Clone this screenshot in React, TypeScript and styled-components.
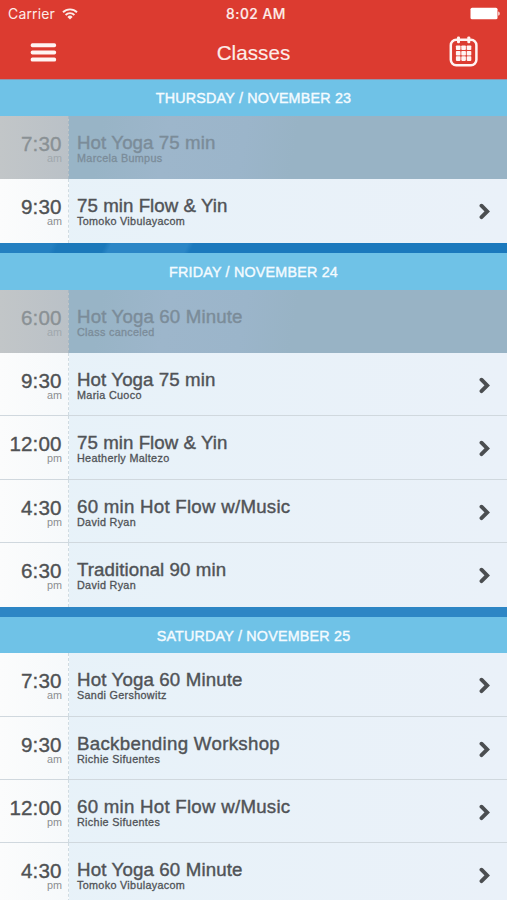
import React from 'react';
import styled, { createGlobalStyle } from 'styled-components';

const GlobalStyle = createGlobalStyle`
  * { box-sizing: border-box; }
  html, body { margin: 0; padding: 0; height: 900px; overflow: hidden; }
  body {
    background: #2882c2;
    font-family: "Liberation Sans", Arial, sans-serif;
    color: #505357;
  }
`;

const Screen = styled.div`
  width: 507px;
  height: 900px;
  overflow: hidden;
  display: flex;
  flex-direction: column;
`;

const TopBar = styled.header`
  flex: none;
  height: 79.4px;
  background: #dc3b30;
  color: #fdece9;
  position: relative;
  box-shadow: 0 1px 0 #9395ac;
`;

const StatusBar = styled.div`
  height: 27px;
  padding: 0 6px 0 8px;
  display: grid;
  grid-template-columns: 1fr auto 1fr;
  align-items: center;
  font-family: Inter, Roboto, sans-serif;
  font-size: 14px;
`;

const Carrier = styled.div`
  display: flex;
  align-items: center;
  gap: 7px;
  letter-spacing: 0.15px;
`;

const Clock = styled.div`
  margin-left: 3px;
  font-size: 13.8px;
  font-weight: 500;
  letter-spacing: 0.5px;
  -webkit-text-stroke: 0.15px currentColor;
`;

const StatusRight = styled.div`
  display: flex;
  justify-content: flex-end;
`;

const NavBar = styled.nav`
  height: 52px;
  padding: 0 28px 0 30px;
  display: grid;
  grid-template-columns: 1fr auto 1fr;
  align-items: center;
`;

const NavTitle = styled.h1`
  margin: 0 2px 0 0;
  font-size: 20.6px;
  font-weight: 400;
  line-height: 52px;
  letter-spacing: 0.05px;
  -webkit-text-stroke: 0.15px currentColor;
`;

const IconButton = styled.button<{ $end?: boolean }>`
  display: flex;
  padding: 0;
  border: 0;
  background: none;
  color: #fff4f2;
  justify-self: ${(p) => (p.$end ? 'end' : 'start')};
`;

const Day = styled.section<{ $gap: string }>`
  flex: none;
  padding-bottom: 10.2px;
  background: ${(p) => p.$gap};
`;

const DayHeading = styled.h2`
  margin: 0;
  height: 36.6px;
  line-height: 38px;
  background: #6fc2e7;
  color: #f4fbff;
  font-size: 14.3px;
  font-weight: 400;
  letter-spacing: 0.21px;
  text-align: center;
  -webkit-text-stroke: 0.4px currentColor;
`;

const Row = styled.div<{ $muted?: boolean }>`
  height: 63.4px;
  display: grid;
  grid-template-columns: 69px 1fr 35px;
  color: ${(p) => (p.$muted ? '#7b8c99' : '#505357')};
  background: ${(p) =>
    p.$muted
      ? 'linear-gradient(100deg, #98b4c6 20%, #9db6cb 33%, #9bb5ca 48%, #98b3c5 58%, #98b3c5)'
      : 'linear-gradient(90deg, #e7f2f9, #eaf1f9)'};
  border-bottom: ${(p) => (p.$muted ? '0' : '1px')} solid #d0d8de;
  &:last-child { border-bottom: 0; }
`;

const TimeCell = styled.div<{ $muted?: boolean }>`
  padding: 19px 6.5px 0 0;
  text-align: right;
  color: ${(p) => (p.$muted ? '#8a9195' : '#505254')};
  background: ${(p) => (p.$muted ? 'linear-gradient(90deg, #c2c6c8, #bac1c7)' : 'linear-gradient(90deg, #fbfcfc, #f6f9fb)')};
  border-right: 1px dashed ${(p) => (p.$muted ? '#a8b7c2' : '#d0dbe1')};
`;

const Hour = styled.div`
  font-size: 20.6px;
  line-height: 18px;
  letter-spacing: 0.1px;
  -webkit-text-stroke: 0.35px currentColor;
`;

const Meridiem = styled.div<{ $muted?: boolean }>`
  font-size: 10.8px;
  line-height: 11px;
  margin-right: -0.5px;
  color: ${(p) => (p.$muted ? '#a0a8ad' : '#8b8e91')};
`;

const Info = styled.div`
  padding: 17px 0 0 8px;
  white-space: nowrap;
`;

const ClassName = styled.div<{ $tracking?: number }>`
  font-size: 18.7px;
  line-height: 19px;
  letter-spacing: ${(p) => p.$tracking ?? 0.09}px;
  -webkit-text-stroke: 0.4px currentColor;
`;

const Teacher = styled.div`
  font-size: 10.8px;
  line-height: 12px;
  letter-spacing: 0.32px;
  -webkit-text-stroke: 0.3px currentColor;
`;

const Arrow = styled.div`
  padding: 24px 0 0 7px;
  svg { display: block; }
`;

type Lesson = {
  hour: string;
  half: string;
  name: string;
  teacher: string;
  muted?: boolean;
  tracking?: number;
};
type DayData = { title: string; gap: string; lessons: Lesson[] };

const days: DayData[] = [
  {
    title: 'THURSDAY / NOVEMBER 23',
    gap: 'linear-gradient(115deg, #2480c1 0 22%, #1b78ba 23% 31%, #2b86c6 32% 45%, #1b79bd 46%)',
    lessons: [
      { hour: '7:30', half: 'am', name: 'Hot Yoga 75 min', teacher: 'Marcela Bumpus', muted: true },
      { hour: '9:30', half: 'am', name: '75 min Flow & Yin', teacher: 'Tomoko Vibulayacom', tracking: 0.05 },
    ],
  },
  {
    title: 'FRIDAY / NOVEMBER 24',
    gap: '#2d86c5',
    lessons: [
      { hour: '6:00', half: 'am', name: 'Hot Yoga 60 Minute', teacher: 'Class canceled', muted: true, tracking: 0.14 },
      { hour: '9:30', half: 'am', name: 'Hot Yoga 75 min', teacher: 'Maria Cuoco' },
      { hour: '12:00', half: 'pm', name: '75 min Flow & Yin', teacher: 'Heatherly Maltezo', tracking: 0.05 },
      { hour: '4:30', half: 'pm', name: '60 min Hot Flow w/Music', teacher: 'David Ryan', tracking: 0.25 },
      { hour: '6:30', half: 'pm', name: 'Traditional 90 min', teacher: 'David Ryan', tracking: 0.07 },
    ],
  },
  {
    title: 'SATURDAY / NOVEMBER 25',
    gap: '#2d86c5',
    lessons: [
      { hour: '7:30', half: 'am', name: 'Hot Yoga 60 Minute', teacher: 'Sandi Gershowitz', tracking: 0.14 },
      { hour: '9:30', half: 'am', name: 'Backbending Workshop', teacher: 'Richie Sifuentes', tracking: 0.3 },
      { hour: '12:00', half: 'pm', name: '60 min Hot Flow w/Music', teacher: 'Richie Sifuentes', tracking: 0.25 },
      { hour: '4:30', half: 'pm', name: 'Hot Yoga 60 Minute', teacher: 'Tomoko Vibulayacom', tracking: 0.14 },
    ],
  },
];

const WifiIcon = () => (
  <svg width="16" height="12" viewBox="0 0 16 12" fill="none" stroke="currentColor" strokeWidth="1.9">
    <path d="M1 4.2a10 10 0 0 1 14 0" />
    <path d="M3.6 7a6.2 6.2 0 0 1 8.8 0" />
    <path d="M8 11.6 5.4 8.9a3.7 3.7 0 0 1 5.2 0z" fill="currentColor" stroke="none" />
  </svg>
);

const BatteryIcon = () => (
  <svg width="31" height="13" viewBox="0 0 31 13" fill="#fff">
    <rect x="0.5" y="0.7" width="27" height="11.6" rx="1.6" />
    <path d="M28.3 4.4c1.8.3 1.8 3.9 0 4.2z" />
  </svg>
);

const MenuIcon = () => (
  <svg width="27" height="20" viewBox="0 0 27 20" fill="currentColor">
    <rect x="0.7" y="0.2" width="25.4" height="4" rx="1.7" />
    <rect x="0.7" y="7.4" width="25.4" height="4" rx="1.7" />
    <rect x="0.7" y="14.6" width="25.4" height="4" rx="1.7" />
  </svg>
);

const CalendarIcon = () => (
  <svg width="30" height="34" viewBox="0 0 30 34" fill="currentColor">
    <rect x="1.8" y="3.8" width="25.6" height="25.4" rx="5.4" fill="none" stroke="currentColor" strokeWidth="2.5" />
    <rect x="8" y="0.4" width="3" height="6.8" rx="1.2" />
    <rect x="18.3" y="0.4" width="3" height="6.8" rx="1.2" />
    {[0, 1, 2].map((r) =>
      [0, 1, 2].map((c) => (
        <rect key={`${r}-${c}`} x={6.9 + c * 5.4} y={9.5 + r * 5.4} width="4.6" height="4.6" rx="0.8" />
      )),
    )}
  </svg>
);

const ChevronIcon = () => (
  <svg width="12" height="17" viewBox="0 0 12 17" fill="none" stroke="#4b4e51" strokeWidth="3.9">
    <path d="M2.5 2.7 8.2 8.4 2.5 14.1" strokeLinejoin="miter" strokeLinecap="round" />
  </svg>
);

export default function App() {
  return (
    <>
      <GlobalStyle />
      <Screen>
        <TopBar>
          <StatusBar>
            <Carrier>
              Carrier
              <WifiIcon />
            </Carrier>
            <Clock>8:02 AM</Clock>
            <StatusRight>
              <BatteryIcon />
            </StatusRight>
          </StatusBar>
          <NavBar>
            <IconButton aria-label="Menu">
              <MenuIcon />
            </IconButton>
            <NavTitle>Classes</NavTitle>
            <IconButton $end aria-label="Calendar">
              <CalendarIcon />
            </IconButton>
          </NavBar>
        </TopBar>
        {days.map((day) => (
          <Day key={day.title} $gap={day.gap}>
            <DayHeading>{day.title}</DayHeading>
            {day.lessons.map((l) => (
              <Row key={l.hour + l.half} $muted={l.muted}>
                <TimeCell $muted={l.muted}>
                  <Hour>{l.hour}</Hour>
                  <Meridiem $muted={l.muted}>{l.half}</Meridiem>
                </TimeCell>
                <Info>
                  <ClassName $tracking={l.tracking}>{l.name}</ClassName>
                  <Teacher>{l.teacher}</Teacher>
                </Info>
                {!l.muted && (
                  <Arrow>
                    <ChevronIcon />
                  </Arrow>
                )}
              </Row>
            ))}
          </Day>
        ))}
      </Screen>
    </>
  );
}
